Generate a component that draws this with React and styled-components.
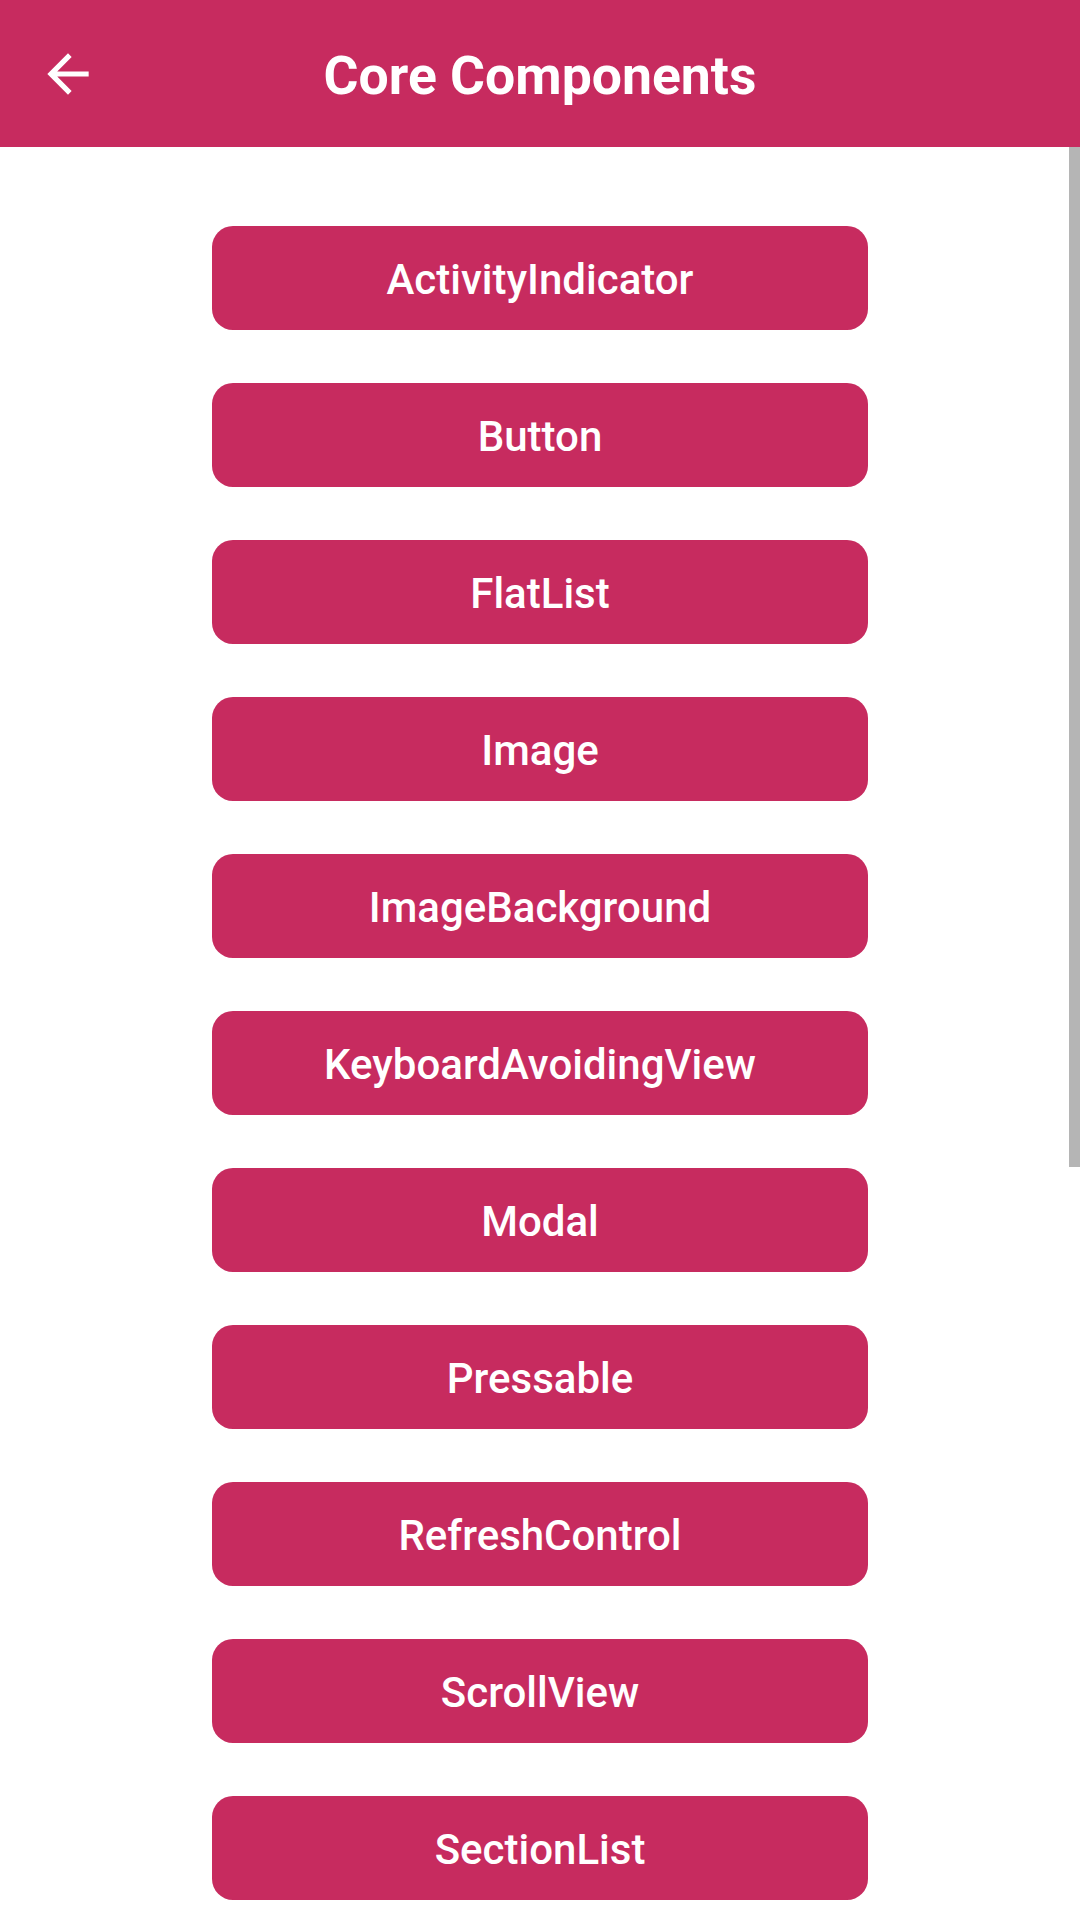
import React from "react";
import styled, { createGlobalStyle } from "styled-components";

const Global = createGlobalStyle`
  html, body { margin: 0; padding: 0; background: #ffffff; }
  body { font-family: Roboto, "Noto Sans", Arial, sans-serif; overflow: hidden; }
  #root { width: 1080px; height: 1920px; }
`;

const Screen = styled.div`
  width: 1080px;
  height: 1920px;
  display: flex;
  flex-direction: column;
  background: #ffffff;
  overflow: hidden;
`;

const Header = styled.header`
  height: 147px;
  flex: none;
  background: #c72b5f;
  display: grid;
  grid-template-columns: 136px 1fr 136px;
  align-items: center;
`;

const BackButton = styled.button`
  border: 0;
  background: transparent;
  padding: 0;
  margin-left: 37px;
  width: 62px;
  height: 62px;
  display: flex;
  align-items: center;
  justify-content: center;
  color: #ffffff;
`;

const Title = styled.h1`
  margin: 0;
  text-align: center;
  color: #ffffff;
  font-family: Roboto, Arial, sans-serif;
  font-weight: 700;
  font-size: 53.5px;
  line-height: 1;
  padding-top: 4px;
`;

const Body = styled.div`
  position: relative;
  flex: 1;
  overflow: hidden;
`;

const List = styled.div`
  display: flex;
  flex-direction: column;
  align-items: center;
  gap: 53px;
  padding-top: 79px;
`;

const Item = styled.button`
  width: 656px;
  height: 104px;
  flex: none;
  border: 0;
  border-radius: 21px;
  background: #c72b5f;
  color: #ffffff;
  font-family: Roboto, Arial, sans-serif;
  font-weight: 500;
  font-size: 42px;
  display: flex;
  align-items: center;
  justify-content: center;
  padding: 2px 0 0;
`;

const Scrollbar = styled.div`
  position: absolute;
  top: 0;
  right: 0;
  width: 11px;
  height: 1020px;
  background: #b5b5b5;
`;

const items = [
  "ActivityIndicator",
  "Button",
  "FlatList",
  "Image",
  "ImageBackground",
  "KeyboardAvoidingView",
  "Modal",
  "Pressable",
  "RefreshControl",
  "ScrollView",
  "SectionList",
];

const ArrowBack = () => (
  <svg width="62" height="62" viewBox="0 0 24 24" fill="currentColor">
    <path d="M20 11H7.83l5.59-5.59L12 4l-8 8 8 8 1.41-1.41L7.83 13H20v-2z" />
  </svg>
);

export default function App() {
  return (
    <>
      <Global />
      <Screen>
        <Header>
          <BackButton aria-label="Back">
            <ArrowBack />
          </BackButton>
          <Title>Core Components</Title>
          <span />
        </Header>
        <Body>
          <List>
            {items.map((t) => (
              <Item key={t}>{t}</Item>
            ))}
          </List>
          <Scrollbar />
        </Body>
      </Screen>
    </>
  );
}
